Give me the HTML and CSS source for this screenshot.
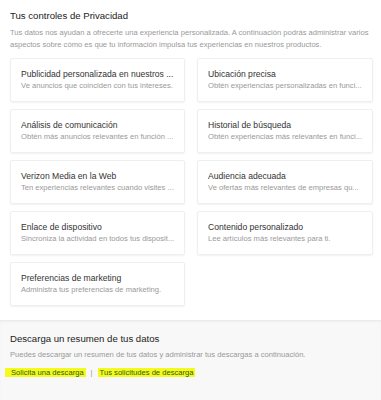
FILE: index.html
```html
<!DOCTYPE html>
<html lang="es">
<head>
<meta charset="utf-8">
<link rel="stylesheet" href="styles.css">
</head>
<body>
<main class="privacy">
  <h1 class="title">Tus controles de Privacidad</h1>
  <p class="intro">Tus datos nos ayudan a ofrecerte una experiencia personalizada. A continuación podrás administrar varios aspectos sobre cómo es que tu información impulsa tus experiencias en nuestros productos.</p>
  <div class="grid">
    <div class="card"><div class="card-title">Publicidad personalizada en nuestros ...</div><div class="card-sub">Ve anuncios que coinciden con tus intereses.</div></div>
    <div class="card"><div class="card-title">Ubicación precisa</div><div class="card-sub">Obtén experiencias personalizadas en funci...</div></div>
    <div class="card"><div class="card-title">Análisis de comunicación</div><div class="card-sub">Obtén más anuncios relevantes en función ...</div></div>
    <div class="card"><div class="card-title">Historial de búsqueda</div><div class="card-sub">Obtén experiencias más relevantes en funci...</div></div>
    <div class="card"><div class="card-title">Verizon Media en la Web</div><div class="card-sub">Ten experiencias relevantes cuando visites ...</div></div>
    <div class="card"><div class="card-title">Audiencia adecuada</div><div class="card-sub">Ve ofertas más relevantes de empresas qu...</div></div>
    <div class="card"><div class="card-title">Enlace de dispositivo</div><div class="card-sub">Sincroniza la actividad en todos tus disposit...</div></div>
    <div class="card"><div class="card-title">Contenido personalizado</div><div class="card-sub">Lee artículos más relevantes para ti.</div></div>
    <div class="card"><div class="card-title">Preferencias de marketing</div><div class="card-sub">Administra tus preferencias de marketing.</div></div>
  </div>
</main>
<section class="download">
  <h2 class="dl-title">Descarga un resumen de tus datos</h2>
  <p class="dl-text">Puedes descargar un resumen de tus datos y administrar tus descargas a continuación.</p>
  <div class="links"><a class="link first" href="#">Solicita una descarga</a><span class="sep">|</span><a class="link" href="#">Tus solicitudes de descarga</a></div>
</section>
</body>
</html>
```
FILE: styles.css
```css
* { box-sizing: border-box; }
html, body { margin: 0; padding: 0; }
body {
  width: 381px;
  height: 400px;
  overflow: hidden;
  background: #fff;
  font-family: "Liberation Sans", Arial, sans-serif;
  color: #333;
}
.privacy {
  padding: 9px 8px 16px 10px;
  height: 320px;
}
.title {
  margin: 0;
  font-size: 9.6px;
  font-weight: normal;
  color: #222;
  line-height: 14px;
}
.intro {
  margin: 4px 0 0;
  font-size: 7.6px;
  line-height: 12px;
  color: #999;
}
.grid {
  margin-top: 7px;
  display: grid;
  grid-template-columns: 175px 176px;
  column-gap: 12px;
  row-gap: 7px;
}
.card {
  height: 44px;
  border: 1px solid #efefef;
  border-radius: 2px;
  box-shadow: 0 1px 2px rgba(0,0,0,0.06);
  padding: 9px 10px 0 10px;
}
.card-title {
  font-size: 8.6px;
  line-height: 12px;
  color: #333;
  white-space: nowrap;
}
.card-sub {
  font-size: 7.6px;
  line-height: 12px;
  color: #999;
  white-space: nowrap;
}
.download {
  height: 80px;
  background: #f8f8f8;
  border-top: 1px solid #ececec;
  box-shadow: inset 0 1px 2px rgba(0,0,0,0.04);
  padding: 11px 10px 0 10px;
}
.dl-title {
  margin: 0;
  font-size: 9.6px;
  font-weight: normal;
  color: #222;
  line-height: 14px;
}
.dl-text {
  margin: 3px 0 0;
  font-size: 7.6px;
  line-height: 12px;
  color: #999;
}
.links {
  margin-top: 7px;
  font-size: 7.6px;
  line-height: 9px;
  display: flex;
  align-items: center;
}
.link {
  color: #2f5a20;
  background: #f4fb1c;
  text-decoration: none;
  padding: 0 2px;
}
.link.first {
  margin-left: -5px;
  padding-left: 6px;
}
.sep {
  color: #999;
  margin: 0 5px;
}
```
